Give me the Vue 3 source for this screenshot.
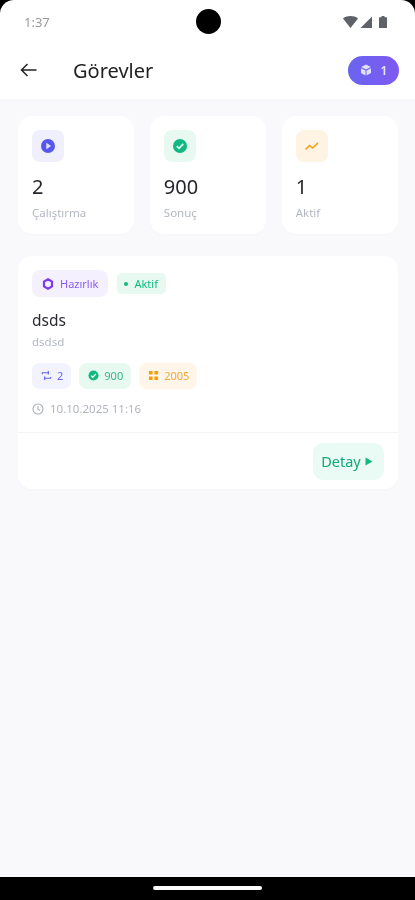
<template>
  <div class="screen">
    <div class="top">
      <div class="status">
        <span class="time">1:37</span>
        <span class="camera"></span>
        <div class="status-icons">
          <svg width="15" height="12" viewBox="0 0 15 12"><path d="M0 2.500C4-.7 11-.7 15 2.500L7.500 12Z" fill="#5f6368" /></svg>
          <svg width="12" height="12" viewBox="0 0 12 12"><path d="M12 .5V12H.5Z" fill="#5f6368" /></svg>
          <svg class="battery" width="8" height="12" viewBox="0 0 8 12"><path d="M2.500 0H5.500V1.300H8V12H0V1.300H2.500Z" fill="#5f6368" /></svg>
        </div>
      </div>
      <div class="appbar">
        <svg class="back" width="17" height="14" viewBox="0 0 17 14">
          <path d="M16.500 7H1.500M7.500 1 1.500 7l6 6" fill="none" stroke="#222" stroke-width="1.500" />
        </svg>
        <h1>Görevler</h1>
        <div class="level">
          <svg width="12" height="12" viewBox="0 0 12 12">
            <path d="M6 .5 10.800 3 6 5.500 1.200 3ZM1 4.200 5.500 6.500V11.500L1 9ZM11 4.200 6.500 6.500V11.500L11 9Z" fill="#e4deff" />
          </svg>
          <span>1</span>
        </div>
      </div>
    </div>

    <main class="content">
      <section class="stats">
        <div v-for="s in stats" :key="s.label" class="stat">
          <div class="stat-icon" :class="s.tone">
            <svg v-if="s.tone === 'indigo'" width="16" height="16" viewBox="0 0 16 16">
              <circle cx="8" cy="8" r="7" fill="#5558ef" /><path d="M6.300 4.800 11 8l-4.700 3.200Z" fill="#e6e6fb" />
            </svg>
            <svg v-else-if="s.tone === 'green'" width="16" height="16" viewBox="0 0 16 16">
              <circle cx="8" cy="8" r="7" fill="#10b981" /><path d="M4.700 8.200 7 10.400l4.300-4.500" fill="none" stroke="#e6f8f1" stroke-width="1.700" />
            </svg>
            <svg v-else width="16" height="16" viewBox="0 0 16 16">
              <path d="M1.500 11.500 5.500 7.500 8.500 10 14 4.800" fill="none" stroke="#f59e0b" stroke-width="1.500" />
            </svg>
          </div>
          <div class="stat-value">{{ s.value }}</div>
          <div class="stat-label">{{ s.label }}</div>
        </div>
      </section>

      <section class="task">
        <div class="task-body">
          <div class="badges">
            <span class="badge purple">
              <svg width="12" height="12" viewBox="0 0 12 12">
                <path d="M6 1.300 10 3.600V8.400L6 10.700 2 8.400V3.600Z" fill="none" stroke="#7c3aed" stroke-width="2.200" />
              </svg>
              Hazırlık
            </span>
            <span class="badge active"><i></i>Aktif</span>
          </div>
          <h2>dsds</h2>
          <p class="desc">dsdsd</p>
          <div class="chips">
            <span class="chip indigo">
              <svg width="11" height="11" viewBox="0 0 12 12">
                <path d="M1.500 4.500V3H8M8 1v4M10.500 7.500V9H4M4 7v4" fill="none" stroke="#6366f1" stroke-width="1.300" />
              </svg>
              2
            </span>
            <span class="chip green">
              <svg width="11" height="11" viewBox="0 0 12 12">
                <circle cx="6" cy="6" r="5.500" fill="#10b981" /><path d="M3.400 6.100 5.200 7.900 8.600 4.400" fill="none" stroke="#e6f8f1" stroke-width="1.400" />
              </svg>
              900
            </span>
            <span class="chip orange">
              <svg width="11" height="11" viewBox="0 0 12 12">
                <path d="M1 1H5V5H1ZM7 1H11V5H7ZM1 7H5V11H1ZM7 7H11V11H7Z" fill="#f59e0b" />
              </svg>
              2005
            </span>
          </div>
          <div class="date">
            <svg width="12" height="12" viewBox="0 0 12 12">
              <circle cx="6" cy="6" r="5" fill="none" stroke="#a8adb7" stroke-width="1.100" />
              <path d="M6 3V6.300L8 7.500" fill="none" stroke="#a8adb7" stroke-width="1.100" />
            </svg>
            10.10.2025 11:16
          </div>
        </div>
        <div class="task-foot">
          <button class="detail" type="button">
            Detay
            <svg width="8" height="9" viewBox="0 0 8 9"><path d="M.5 .5 7.500 4.500 .5 8.500Z" fill="#10b981" /></svg>
          </button>
        </div>
      </section>
    </main>

    <div class="navbar"><span></span></div>
  </div>
</template>

<script setup>
const stats = [
  { value: '2', label: 'Çalıştırma', tone: 'indigo' },
  { value: '900', label: 'Sonuç', tone: 'green' },
  { value: '1', label: 'Aktif', tone: 'orange' }
]
</script>

<style>
html, body {
  margin: 0;
  background: #f9f9fc;
}
</style>

<style scoped>
.screen {
  height: 900px;
  display: flex;
  flex-direction: column;
  overflow: hidden;
  background: #f9f9fc;
  font-family: "Noto Sans", "Open Sans", sans-serif;
  color: #1c1c22;
  filter: blur(0.45px);
}
.top {
  background: #fff;
  height: 99px;
  border-radius: 14px 14px 0 0;
  box-shadow: 0 -14px 0 #000;
}
.status {
  height: 44px;
  padding: 0 28px 0 24px;
  display: flex;
  align-items: center;
  justify-content: space-between;
  position: relative;
}
.time {
  font-size: 13px;
  color: #9a9a9a;
}
.camera {
  position: absolute;
  left: 196px;
  top: 9px;
  width: 25px;
  height: 25px;
  border-radius: 50%;
  background: #000;
}
.status-icons {
  display: flex;
  align-items: center;
  gap: 2px;
}
.battery {
  margin-left: 5px;
}
.appbar {
  height: 52px;
  padding: 0 16px 0 20px;
  display: flex;
  align-items: center;
}
.back {
  flex: none;
}
h1 {
  margin: 0 0 0 36px;
  flex: 1;
  font-size: 20px;
  font-weight: 400;
  color: #222;
}
.level {
  width: 51px;
  height: 29px;
  border-radius: 15px;
  background: linear-gradient(90deg, #6a64f1, #7e5af0);
  color: #e9e5ff;
  display: flex;
  align-items: center;
  justify-content: center;
  gap: 9px;
  font-size: 12px;
  font-weight: 600;
}
.content {
  flex: 1;
  padding: 17px 17px 0 18px;
}
.stats {
  display: grid;
  grid-template-columns: repeat(3, 1fr);
  gap: 15.500px;
}
.stat {
  height: 118px;
  box-sizing: border-box;
  padding: 14px;
  background: #fff;
  border-radius: 14px;
  box-shadow: 0 1px 3px rgba(30, 30, 60, 0.02);
}
.stat-icon {
  width: 32px;
  height: 32px;
  border-radius: 8px;
  display: flex;
  align-items: center;
  justify-content: center;
}
.stat-icon.indigo { background: #efeffe; }
.stat-icon.green { background: #e8f9f2; }
.stat-icon.orange { background: #fff4e4; }
.stat-value {
  margin-top: 13px;
  font-size: 20px;
  line-height: 24px;
  font-weight: 400;
  color: #26262c;
}
.stat-label {
  margin-top: 6px;
  font-size: 11.500px;
  line-height: 15px;
  color: #b4b8c2;
}
.task {
  margin-top: 22px;
  background: #fff;
  border-radius: 14px;
  box-shadow: 0 1px 3px rgba(30, 30, 60, 0.02);
}
.task-body {
  height: 177px;
  box-sizing: border-box;
  padding: 14px;
  border-bottom: 1px solid #f3f4f7;
}
.badges {
  display: flex;
  align-items: center;
  gap: 9px;
  height: 27px;
}
.badge {
  display: inline-flex;
  align-items: center;
  font-size: 11px;
}
.badge.purple {
  height: 27px;
  padding: 0 10px;
  gap: 6px;
  border-radius: 8px;
  background: #f4f0fe;
  color: #8b5cf6;
}
.badge.active {
  height: 21px;
  padding: 0 8px 0 7px;
  gap: 6px;
  border-radius: 5px;
  background: #e8f9f2;
  color: #10b981;
}
.badge.active i {
  width: 4px;
  height: 4px;
  border-radius: 50%;
  background: #10b981;
}
h2 {
  margin: 13px 0 0;
  font-size: 15.500px;
  line-height: 20px;
  font-weight: 400;
  color: #2a2a30;
}
.desc {
  margin: 4px 0 0;
  font-size: 11.500px;
  line-height: 15px;
  color: #b4b8c2;
}
.chips {
  display: flex;
  gap: 8px;
  margin-top: 14px;
}
.chip {
  height: 26px;
  padding: 0 8px 2px 9px;
  box-sizing: border-box;
  display: inline-flex;
  align-items: center;
  gap: 5px;
  border-radius: 8px;
  font-size: 11px;
}
.chip.indigo { background: #f3f3ff; color: #6366f1; }
.chip.green { background: #e8f9f2; color: #34b98a; }
.chip.orange { background: #fff5e8; color: #f5a83a; }
.date {
  margin-top: 12px;
  display: flex;
  align-items: center;
  gap: 6px;
  font-size: 11.500px;
  color: #b0b4bd;
}
.task-foot {
  height: 56px;
  padding-right: 14px;
  display: flex;
  align-items: center;
  justify-content: flex-end;
}
.detail {
  height: 37px;
  width: 71px;
  padding: 0 3px 0 0;
  box-sizing: border-box;
  border: none;
  border-radius: 10px;
  background: #eafaf4;
  color: #10a878;
  font: inherit;
  font-size: 14.500px;
  display: flex;
  align-items: center;
  justify-content: center;
  gap: 4px;
}
.navbar {
  height: 23px;
  background: #000;
  display: flex;
  justify-content: center;
  padding-top: 9px;
  box-sizing: border-box;
}
.navbar span {
  width: 109px;
  height: 4px;
  border-radius: 2px;
  background: #fff;
}
</style>
